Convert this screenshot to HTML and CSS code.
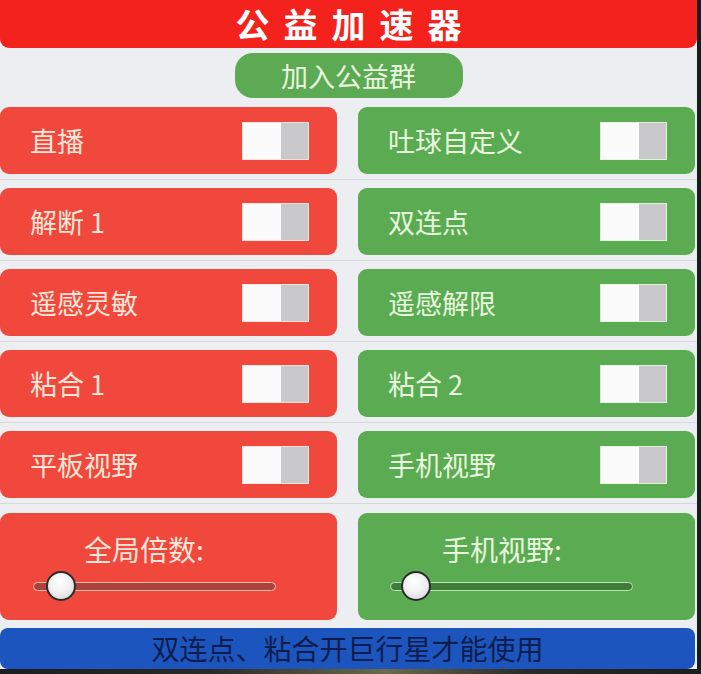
FILE: index.html
```html
<!DOCTYPE html>
<html lang="zh-CN">
<head>
<meta charset="utf-8">
<title>公益加速器</title>
<link rel="stylesheet" href="styles.css">
</head>
<body>
<div class="panel">
  <header class="title">公益加速器</header>
  <div class="join-wrap"><div class="join">加入公益群</div></div>

  <div class="row">
    <div class="card red"><span class="label">直播</span><span class="toggle"></span></div>
    <div class="card green"><span class="label">吐球自定义</span><span class="toggle"></span></div>
  </div>
  <div class="sep"></div>
  <div class="row">
    <div class="card red"><span class="label">解断 1</span><span class="toggle"></span></div>
    <div class="card green"><span class="label">双连点</span><span class="toggle"></span></div>
  </div>
  <div class="sep"></div>
  <div class="row">
    <div class="card red"><span class="label">遥感灵敏</span><span class="toggle"></span></div>
    <div class="card green"><span class="label">遥感解限</span><span class="toggle"></span></div>
  </div>
  <div class="sep"></div>
  <div class="row">
    <div class="card red"><span class="label">粘合 1</span><span class="toggle"></span></div>
    <div class="card green"><span class="label">粘合 2</span><span class="toggle"></span></div>
  </div>
  <div class="sep"></div>
  <div class="row">
    <div class="card red"><span class="label">平板视野</span><span class="toggle"></span></div>
    <div class="card green"><span class="label">手机视野</span><span class="toggle"></span></div>
  </div>
  <div class="sep last"></div>

  <div class="row sliders">
    <div class="slider-card red">
      <div class="slider-label">全局倍数:</div>
      <div class="track"><span class="knob"></span></div>
    </div>
    <div class="slider-card green">
      <div class="slider-label">手机视野:</div>
      <div class="track"><span class="knob"></span></div>
    </div>
  </div>

  <div class="banner">双连点、粘合开巨行星才能使用</div>
</div>
<div class="strip"></div>
</body>
</html>
```

FILE: styles.css
```css
html, body {
  margin: 0;
  padding: 0;
}
body {
  width: 701px;
  height: 674px;
  background: #1b1b1d;
  font-family: "Noto Sans CJK SC", "Noto Sans", sans-serif;
  overflow: hidden;
}
.panel {
  width: 697px;
  height: 669px;
  background: #edeef2;
  display: flex;
  flex-direction: column;
}
.title {
  height: 48px;
  background: #f3221d;
  border-radius: 0 0 9px 9px;
  color: #ffffff;
  font-size: 34px;
  font-weight: 700;
  letter-spacing: 14px;
  padding-left: 14px;
  line-height: 48px;
  text-align: center;
}
.join-wrap {
  display: flex;
  justify-content: center;
  padding-top: 5px;
  margin-bottom: 9px;
}
.join {
  width: 228px;
  height: 45px;
  border-radius: 18px;
  background: #5caa53;
  color: #eaf6df;
  font-size: 27px;
  line-height: 45px;
  text-align: center;
}
.row {
  display: grid;
  grid-template-columns: 337px 337px;
  column-gap: 21px;
}
.card {
  height: 67px;
  border-radius: 9px;
  display: flex;
  align-items: center;
  justify-content: space-between;
}
.red {
  background: #f0483d;
  color: #fde6d8;
}
.green {
  background: #5aab51;
  color: #e7f7de;
}
.label {
  padding-left: 30px;
  font-size: 27px;
  line-height: 30px;
}
.toggle {
  width: 65px;
  height: 36px;
  margin-right: 28px;
  border: 1px solid rgba(255, 226, 214, 0.9);
  background: linear-gradient(to right, #fbfbfb 0, #fbfbfb 38px, #c9c9cb 38px, #c9c9cb 100%);
}
.green .toggle {
  border-color: rgba(226, 244, 220, 0.9);
}
.sep {
  height: 1px;
  background: #d7d8de;
  margin: 5px 0 8px;
}
.sep.last {
  margin-bottom: 9px;
}
.slider-card {
  height: 107px;
  border-radius: 9px;
  box-sizing: border-box;
  padding-top: 19px;
}
.slider-label {
  padding-left: 84px;
  font-size: 28px;
  line-height: 34px;
}
.track {
  position: relative;
  margin: 16px 0 0 33px;
  width: 241px;
  height: 7px;
  border-radius: 5px;
}
.red .track {
  background: #a9433b;
  border: 1.5px solid #f7b8ab;
}
.green .track {
  margin-left: 32px;
  background: #3e7d39;
  border: 1.5px solid #bfe4b4;
}
.knob {
  position: absolute;
  left: 12px;
  top: -12px;
  width: 26px;
  height: 26px;
  border-radius: 50%;
  border: 2px solid #2b2b2b;
  background: radial-gradient(circle at 45% 35%, #ffffff 0, #f2f2f2 45%, #cfcfd2 100%);
}
.green .knob {
  left: 10px;
}
.banner {
  margin-top: 8px;
  height: 41px;
  margin-right: 2px;
  border-radius: 8px;
  background: #1d55be;
  color: #0e1d4d;
  font-size: 28px;
  line-height: 41px;
  text-align: center;
}
.strip {
  height: 5px;
  background: linear-gradient(to right, #1d1d1f 0, #2a2a2a 30%, #6b6a4a 55%, #2a2a2a 75%, #1d1d1f 100%);
}
```
